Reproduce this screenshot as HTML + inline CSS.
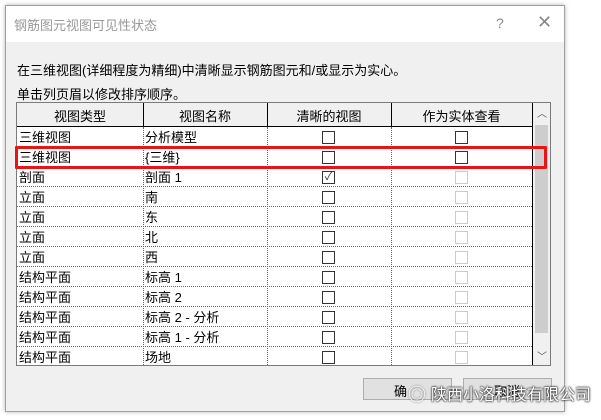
<!DOCTYPE html><html><head><meta charset="utf-8"><style>
body{margin:0;width:601px;height:420px;overflow:hidden;background:#fff;position:relative;font-family:"Liberation Sans","Noto Sans CJK SC",sans-serif;font-size:13px;color:#000}
.a{position:absolute}
.dlg{left:5px;top:5px;width:558px;height:405px;background:#f0f0f0;border:1px solid #a0a0a0;box-shadow:0 0 4px rgba(0,0,0,.3)}
.tb{left:0;top:0;width:558px;height:36px;background:#fff}
.tbl{left:16px;top:102px;width:533px;height:262px;background:#fff;border:1px solid #7a7a7a;overflow:hidden}
.cb{position:absolute;width:11px;height:11px;border:1px solid #333;background:#fff}
.cb.d{border-color:#ccc}
.btn{position:absolute;top:378px;width:87px;height:20px;background:#e1e1e1;border:1px solid #adadad}
</style></head><body>
<div class="a dlg">
<div class="a tb"><span class="a" style="left:8px;top:9px;color:#999">钢筋图元视图可见性状态</span><span class="a" style="left:490px;top:9px;color:#888;font-size:14px">?</span><span class="a" style="left:531px;top:6px;color:#888;font-size:18px">✕</span></div>
<span class="a" style="left:11px;top:54px">在三维视图(详细程度为精细)中清晰显示钢筋图元和/或显示为实心。</span>
<span class="a" style="left:11px;top:78px">单击列页眉以修改排序顺序。</span>
</div>
<div class="a tbl" id="t"></div>
<div class="a" style="left:15px;top:146px;width:526px;height:17px;border:3px solid #e81515;border-radius:1px"></div>
<div class="btn" style="left:363px"><span class="a" style="left:30px;top:2px">确</span></div>
<div class="btn" style="left:463px"><span class="a" style="left:30px;top:2px">取消</span></div>
<span class="a" style="left:408px;top:381px;font-size:18px;color:#fff;text-shadow:0 0 2px #555">◎</span>
<span class="a" style="left:431px;top:381px;font-size:16px;color:#fff;text-shadow:0 0 1px #333,0 0 2px #333,0 0 2px #333">陕西小洛科技有限公司</span>
<script>
var rows=[["三维视图","分析模型",0,0],["三维视图","{三维}",0,0],["剖面","剖面 1",1,1],["立面","南",0,1],["立面","东",0,1],["立面","北",0,1],["立面","西",0,1],["结构平面","标高 1",0,1],["结构平面","标高 2",0,1],["结构平面","标高 2 - 分析",0,1],["结构平面","标高 1 - 分析",0,1],["结构平面","场地",0,1]];
var h='<div class="a" style="left:0;top:0;width:517px;height:23px;background:#f0f0f0;border-bottom:1px solid #000"></div>';
var cols=[[0,126,"视图类型"],[126,124,"视图名称"],[250,124,"清晰的视图"],[374,141,"作为实体查看"]];
cols.forEach(function(c,i){h+='<div class="a" style="left:'+c[0]+'px;top:3px;width:'+c[1]+'px;text-align:center">'+c[2]+'</div>';if(i)h+='<div class="a" style="left:'+c[0]+'px;top:0;height:23px;border-left:1px solid #000"></div>';});
h+='<div class="a" style="left:515px;top:0;width:1px;height:262px;background:#000"></div>';
[126,250,374].forEach(function(x){h+='<div class="a" style="left:'+x+'px;top:24px;height:240px;border-left:1px dotted #666"></div>';});
rows.forEach(function(r,i){var y=24+i*20;h+='<div class="a" style="left:0;top:'+(y+19)+'px;width:515px;border-top:1px dotted #666"></div>';
h+='<span class="a" style="left:2px;top:'+(y)+'px">'+r[0]+'</span><span class="a" style="left:128px;top:'+(y)+'px">'+r[1]+'</span>';
h+='<div class="cb" style="left:305px;top:'+(y+4)+'px;text-align:center;line-height:11px;font-size:11px;color:#333">'+(r[2]?'✓':'')+'</div>';
h+='<div class="cb'+(r[3]?' d':'')+'" style="left:438px;top:'+(y+4)+'px"></div>';});
h+='<div class="a" style="left:516px;top:0;width:17px;height:262px;background:#f0f0f0"></div><div class="a" style="left:518px;top:22px;width:13px;height:208px;background:#cdcdcd"></div><span class="a" style="left:520px;top:2px;font-size:10px;color:#555">︿</span><span class="a" style="left:520px;top:245px;font-size:10px;color:#555">﹀</span>';
document.getElementById('t').innerHTML=h;
</script>
</body></html>
